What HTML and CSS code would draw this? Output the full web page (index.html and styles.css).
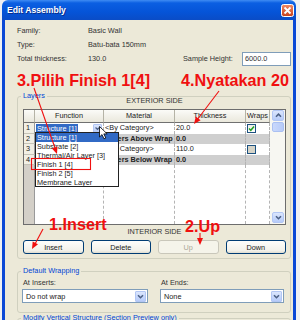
FILE: index.html
```html
<!DOCTYPE html>
<html lang="en">
<head>
  <meta charset="UTF-8" />
  <meta name="viewport" content="width=device-width, initial-scale=1.0"/>
  <title>Edit Assembly</title>
  <link rel="stylesheet" href="styles.css">
</head>
<body>
  <div class="window">
    <div class="titlebar">
      <span class="title">Edit Assembly</span>
      <svg class="close" width="13" height="13" viewBox="0 0 13 13">
        <defs>
          <linearGradient id="closeBg" x1="0" y1="0" x2="0" y2="1">
            <stop offset="0" stop-color="#f08a66"/>
            <stop offset="1" stop-color="#c8401a"/>
          </linearGradient>
        </defs>
        <rect x="0.5" y="0.5" width="12" height="12" rx="2" fill="url(#closeBg)" stroke="#fff"/>
        <path d="M3.5 3.5L9.5 9.5M9.5 3.5L3.5 9.5" stroke="#fff" stroke-width="1.8"/>
      </svg>
    </div>

    <div class="frame">
      <div class="info-row"><span class="label">Family:</span><span>Basic Wall</span></div>
      <div class="info-row"><span class="label">Type:</span><span>Batu-bata 150mm</span></div>
      <div class="info-row tall">
        <span class="label">Total thickness:</span>
        <span class="value">130.0</span>
        <span class="label-sh">Sample Height:</span>
        <span class="input">6000.0</span>
      </div>

      <fieldset class="group layers">
        <legend>Layers</legend>
        <div class="side side-top">EXTERIOR SIDE</div>

        <div class="table">
          <div class="grid">
            <div class="th num"></div>
            <div class="th">Function</div>
            <div class="th">Material</div>
            <div class="th">Thickness</div>
            <div class="th">Wraps</div>

            <div class="td num">1</div>
            <div class="td combo-cell">
              <span class="sel">Structure [1]</span>
              <span class="drop-btn">
                <svg width="9" height="9" viewBox="0 0 9 9"><path d="M2 3.2L4.5 5.7L7 3.2" fill="none" stroke="#4d6185" stroke-width="1.6"/></svg>
              </span>
            </div>
            <div class="td">&lt;By Category&gt;</div>
            <div class="td">20.0</div>
            <div class="td box">
              <span class="check">
                <svg width="7" height="7" viewBox="0 0 7 7"><path d="M1 3.5L2.8 5.3L6 1.5" fill="none" stroke="#21a121" stroke-width="1.5"/></svg>
              </span>
            </div>

            <div class="td num">2</div>
            <div class="td core"></div>
            <div class="td core">Layers Above Wrap</div>
            <div class="td core">0.0</div>
            <div class="td core"></div>

            <div class="td num">3</div>
            <div class="td"></div>
            <div class="td">&lt;By Category&gt;</div>
            <div class="td">110.0</div>
            <div class="td box"><span class="check off"></span></div>

            <div class="td num">4</div>
            <div class="td core"></div>
            <div class="td core">Layers Below Wrap</div>
            <div class="td core">0.0</div>
            <div class="td core"></div>

            <div class="td num filler"></div>
            <div class="td"></div>
            <div class="td"></div>
            <div class="td"></div>
            <div class="td"></div>
          </div>

          <div class="scroll">
            <span class="sb-btn">
              <svg width="9" height="9" viewBox="0 0 9 9"><path d="M2 5.7L4.5 3.2L7 5.7" fill="none" stroke="#4d6185" stroke-width="1.6"/></svg>
            </span>
            <span class="sb-thumb"></span>
            <span class="sb-track"></span>
            <span class="sb-btn">
              <svg width="9" height="9" viewBox="0 0 9 9"><path d="M2 3.2L4.5 5.7L7 3.2" fill="none" stroke="#4d6185" stroke-width="1.6"/></svg>
            </span>
          </div>

          <ul class="dropdown">
            <li class="active">Structure [1]</li>
            <li>Substrate [2]</li>
            <li>Thermal/Air Layer [3]</li>
            <li>Finish 1 [4]</li>
            <li>Finish 2 [5]</li>
            <li>Membrane Layer</li>
          </ul>

          <svg class="cursor" width="9" height="14" viewBox="0 0 9 14">
            <path d="M0.5 0.5V11L3 8.6L5 12.8L6.8 12L4.8 7.9H8.2Z" fill="#fff" stroke="#000" stroke-width="0.8"/>
          </svg>
        </div>

        <div class="side">INTERIOR SIDE</div>

        <div class="buttons">
          <button>Insert</button>
          <button>Delete</button>
          <button disabled>Up</button>
          <button>Down</button>
        </div>
      </fieldset>

      <fieldset class="group wrapping">
        <legend>Default Wrapping</legend>
        <div class="wrap-grid">
          <div>
            <div class="field-label">At Inserts:</div>
            <div class="select">
              <span>Do not wrap</span>
              <span class="drop-btn">
                <svg width="9" height="9" viewBox="0 0 9 9"><path d="M2 3.2L4.5 5.7L7 3.2" fill="none" stroke="#4d6185" stroke-width="1.6"/></svg>
              </span>
            </div>
          </div>
          <div>
            <div class="field-label">At Ends:</div>
            <div class="select">
              <span>None</span>
              <span class="drop-btn">
                <svg width="9" height="9" viewBox="0 0 9 9"><path d="M2 3.2L4.5 5.7L7 3.2" fill="none" stroke="#4d6185" stroke-width="1.6"/></svg>
              </span>
            </div>
          </div>
        </div>
      </fieldset>

      <fieldset class="group modify">
        <legend>Modify Vertical Structure (Section Preview only)</legend>
      </fieldset>
    </div>

    <!-- red tutorial notes drawn over the dialog -->
    <div class="notes">
      <svg class="arrows" width="294" height="320" viewBox="0 0 294 320">
        <g stroke="#f01010" stroke-width="1.1" fill="none">
          <path d="M32 88L53 148"/>
          <path d="M217 91L195 120"/>
          <path d="M41 229L33 244"/>
          <path d="M198 233V239"/>
          <rect x="29.5" y="158.5" width="59" height="11"/>
        </g>
        <g fill="#f01010">
          <path d="M55 154L49.9 148.4L55.5 146.4Z"/>
          <path d="M192 124L193.8 116.6L198.6 120.2Z"/>
          <path d="M30 249L30.7 241.4L36 244.3Z"/>
          <path d="M198 245L195 238H201Z"/>
        </g>
      </svg>
      <span class="note note-pilih">3.Pilih Finish 1[4]</span>
      <span class="note note-nyatakan">4.Nyatakan 20</span>
      <span class="note note-insert">1.Insert</span>
      <span class="note note-up">2.Up</span>
    </div>
  </div>
</body>
</html>
```

FILE: styles.css
```css
:root {
  --xp-face: #ece9d8;
  --xp-blue: #0a48d6;
  --legend: #0046d5;
  --group-line: #d0d0bf;
  --field-line: #7f9db9;
  --note: #f01010;
}

* {
  box-sizing: border-box;
  margin: 0;
  padding: 0;
}

html, body {
  width: 300px;
  height: 320px;
  overflow: hidden;
}

body {
  background: #eef0f3;
  font-family: "Liberation Sans", Arial, sans-serif;
  font-size: 7.3px;
  color: #222;
}

.window {
  position: relative;
  margin-left: 2px;
  width: 294px;
  height: 320px;
  display: flex;
  flex-direction: column;
}

.titlebar {
  height: 20px;
  flex-shrink: 0;
  display: flex;
  align-items: center;
  justify-content: space-between;
  padding: 0 2px 0 5px;
  border-radius: 6px 6px 0 0;
  background: linear-gradient(#3f8cf3 0, #0b5fe2 3px, #0554d8 60%, #0a4cc6 100%);
}

.title {
  color: #fff;
  font-size: 8.6px;
  font-weight: 700;
  text-shadow: 1px 1px 0 #0a2e8c;
}

.frame {
  flex: 1;
  background: var(--xp-face);
  border-left: 3px solid var(--xp-blue);
  border-right: 3px solid var(--xp-blue);
  padding: 3px 2px 0 12px;
  overflow: hidden;
}

/* family / type rows */
.info-row {
  display: flex;
  align-items: center;
  height: 14px;
  color: #333;
}

.info-row.tall {
  height: 15px;
}

.label {
  width: 71px;
}

.value {
  width: 95px;
}

.label-sh {
  width: 59px;
}

.input {
  width: 49px;
  height: 14px;
  line-height: 12px;
  padding-left: 2px;
  background: #fff;
  border: 1px solid var(--field-line);
}

/* group boxes */
.group {
  border: 1px solid var(--group-line);
  border-radius: 3px;
  min-width: 0;
}

.group legend {
  color: var(--legend);
  line-height: 8px;
  padding: 0 2px;
}

.layers {
  margin-top: 26px;
  padding: 0 4px 4px 5px;
}

.layers legend {
  margin-left: -2px;
}

.side {
  text-align: center;
  line-height: 8px;
  color: #333;
  margin-top: 3px;
}

.side-top {
  margin-top: -3px;
}

/* layer table */
.table {
  position: relative;
  display: flex;
  height: 116px;
  margin-top: 4px;
  background: #fff;
  border: 1px solid #6d6d6d;
}

.grid {
  display: grid;
  grid-template-columns: 11px 69px 71px 71px 24px;
  grid-template-rows: 13px repeat(4, 10.5px) 1fr;
}

.th {
  line-height: 12px;
  text-align: center;
  background: linear-gradient(#fbfbf8, #eae8dc);
  border-right: 1px solid #b5b3a6;
  border-bottom: 1px solid #707070;
}

.td {
  line-height: 10.5px;
  padding-left: 1px;
  white-space: nowrap;
  overflow: hidden;
  border-right: 1px dashed #b4b4b4;
}

.td.num {
  background: #f1efe4;
  border-right: 1px solid #9a9a9a;
  border-bottom: 1px solid #c6c4b8;
  padding-left: 2px;
}

.td.num.filler {
  background: #d4d0c8;
  border-bottom: none;
}

.td.core {
  background: #cfcfcf;
  font-weight: 700;
}

.td.box {
  display: flex;
  align-items: center;
  padding-left: 1px;
}

.combo-cell {
  display: flex;
  align-items: center;
  justify-content: space-between;
  padding-right: 1px;
}

.sel {
  background: #316ac5;
  color: #fff;
  padding: 0 1px;
  line-height: 9px;
}

.drop-btn {
  display: flex;
  align-items: center;
  justify-content: center;
  width: 9px;
  height: 9px;
  background: linear-gradient(#dbe6fd, #b6cbf9);
  border: 1px solid #b2c6f4;
  border-radius: 1px;
}

.check {
  display: flex;
  align-items: center;
  justify-content: center;
  width: 9px;
  height: 9px;
  border: 1px solid #1c5180;
  background: linear-gradient(#eeede5, #fff);
}

.check.off {
  background: #d6d4c8;
}

.scroll {
  flex: 1;
  display: flex;
  flex-direction: column;
  padding: 0 1px 1px 2px;
  background: #f7f7f2;
}

.sb-btn {
  display: flex;
  align-items: center;
  justify-content: center;
  height: 11px;
  background: linear-gradient(#dbe6fd, #b6cbf9);
  border: 1px solid #b2c6f4;
  border-radius: 2px;
}

.sb-thumb {
  height: 10px;
  margin-top: 1px;
  background: linear-gradient(90deg, #c9d8fc, #b7cbf8);
  border: 1px solid #aac0f2;
  border-radius: 2px;
}

.sb-track {
  flex: 1;
}

.dropdown {
  position: absolute;
  left: 11px;
  top: 22px;
  width: 84px;
  height: 55px;
  list-style: none;
  background: #fff;
  border: 1px solid #222;
}

.dropdown li {
  height: 9px;
  line-height: 9px;
  padding-left: 1px;
  color: #222;
  white-space: nowrap;
}

.dropdown li.active {
  background: #316ac5;
  color: #fff;
}

.cursor {
  position: absolute;
  left: 75px;
  top: 16px;
}

/* buttons */
.buttons {
  display: grid;
  grid-template-columns: repeat(4, 1fr);
  gap: 7px;
  margin-top: 4px;
}

.buttons button {
  height: 14px;
  font: inherit;
  color: #222;
  background: linear-gradient(#fdfdfb, #f2f1ea 80%, #dedcd0);
  border: 1px solid #003c74;
  border-radius: 3px;
}

.buttons button:disabled {
  color: #aca899;
  background: #f5f4ea;
  border-color: #c9c7ba;
}

/* default wrapping */
.wrapping {
  margin-top: 8px;
  padding: 0 6px 9px 4px;
}

.wrapping legend {
  margin-left: -1px;
}

.wrap-grid {
  display: grid;
  grid-template-columns: 126px 124px;
  column-gap: 12px;
}

.field-label {
  line-height: 9px;
  margin-top: 3px;
  padding-left: 1px;
  color: #333;
}

.select {
  display: flex;
  align-items: center;
  justify-content: space-between;
  height: 14px;
  margin-top: 2px;
  padding: 0 1px 0 3px;
  background: #fff;
  border: 1px solid var(--field-line);
}

.select .drop-btn {
  width: 11px;
  height: 11px;
}

.modify {
  margin-top: 1px;
  height: 20px;
  padding: 0 4px;
}

.modify legend {
  margin-left: -1px;
}

/* tutorial notes */
.notes {
  position: absolute;
  inset: 0;
  pointer-events: none;
}

.arrows {
  position: absolute;
  left: 0;
  top: 0;
}

.note {
  position: absolute;
  color: var(--note);
  font-size: 16.2px;
  font-weight: 700;
  line-height: 16.5px;
  white-space: nowrap;
}

.note-pilih {
  left: 15px;
  top: 72px;
}

.note-nyatakan {
  left: 179px;
  top: 72px;
}

.note-insert {
  left: 47px;
  top: 216px;
}

.note-up {
  left: 183px;
  top: 218px;
}
```
